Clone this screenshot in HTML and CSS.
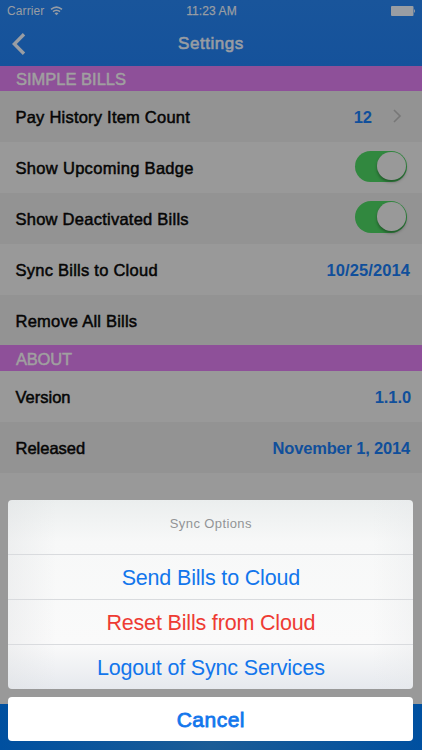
FILE: index.html
```html
<!DOCTYPE html>
<html lang="en">
<head>
<meta charset="utf-8">
<title>Settings</title>
<link rel="stylesheet" href="styles.css">
</head>
<body>
<div class="screen">
  <header class="header">
    <div class="status">
      <div class="carrier"><span>Carrier</span>
        <svg width="13" height="10" viewBox="0 0 13 10" fill="none" stroke="#969ca5" stroke-width="1.5"><path d="M1 3.4Q6.5-1.2 12 3.4M3 5.7Q6.5 2.8 10 5.7"/><path d="M4.5 7.3Q6.5 5.7 8.5 7.3L6.5 9.3Z" fill="#969ca5" stroke="none"/></svg>
      </div>
      <span class="time">11:23 AM</span>
      <svg class="battery" width="25" height="10" viewBox="0 0 25 10" fill="#999da3"><rect width="22.5" height="10" rx="1"/><path d="M23 3Q25 5 23 7Z"/></svg>
    </div>
    <div class="nav">
      <svg class="back" width="14" height="22" viewBox="0 0 14 22" fill="none" stroke="#999da3" stroke-width="3.4"><path d="M12 1.3 2.3 11 12 20.7"/></svg>
      <h1 class="title">Settings</h1>
    </div>
  </header>
  <main class="list">
    <h2 class="section"><span class="simple">SIMPLE BILLS</span></h2>
    <div class="row alt"><span class="pay">Pay History Item Count</span><span class="value count">12</span><svg class="chevron" width="9" height="14" viewBox="0 0 9 14" fill="none" stroke="#777" stroke-width="1.6"><path d="M1 1 7 7 1 13"/></svg></div>
    <div class="row"><span class="upcoming">Show Upcoming Badge</span><span class="switch"></span></div>
    <div class="row alt"><span class="deactivated">Show Deactivated Bills</span><span class="switch"></span></div>
    <div class="row"><span class="sync">Sync Bills to Cloud</span><span class="value date">10/25/2014</span></div>
    <div class="row alt"><span class="remove">Remove All Bills</span></div>
    <h2 class="section"><span class="about">ABOUT</span></h2>
    <div class="row"><span class="version">Version</span><span class="value number">1.1.0</span></div>
    <div class="row alt"><span class="released">Released</span><span class="value month">November 1, 2014</span></div>
  </main>
  <footer class="tabbar"></footer>
  <div class="sheet">
    <div class="options">
      <div class="sheet-title"><span>Sync Options</span></div>
      <div class="action"><span class="send">Send Bills to Cloud</span></div>
      <div class="action danger"><span class="reset">Reset Bills from Cloud</span></div>
      <div class="action"><span class="logout">Logout of Sync Services</span></div>
    </div>
    <div class="cancel"><span>Cancel</span></div>
  </div>
</div>
</body>
</html>
```
FILE: styles.css
```css
* { box-sizing: border-box; }
body { margin: 0; font-family: "Liberation Sans", Arial, sans-serif; }
.screen { position: relative; display: flex; flex-direction: column; width: 422px; height: 750px; overflow: hidden; background: #999; }
.header { height: 65.5px; background: linear-gradient(#19559b, #15529b); color: #999da3; }
.status { display: grid; grid-template-columns: 1fr auto 1fr; align-items: center; height: 22px; padding: 0 6px 0 7px; font-size: 12px; }
.carrier { display: flex; align-items: center; gap: 6px; letter-spacing: .1px; }
.time { letter-spacing: .1px; -webkit-text-stroke: .25px; }
.battery { justify-self: end; }
.nav { display: grid; grid-template-columns: 30px 1fr 30px; align-items: center; height: 43.5px; padding: 0 12px; }
.title { margin: 0; text-align: center; font-size: 17px; font-weight: 400; letter-spacing: .55px; -webkit-text-stroke: .6px; }
.section { display: flex; align-items: center; height: 25.5px; margin: 0; padding: 2px 16px 0; background: #8e5099; color: #a0a0a0; font-size: 16.5px; font-weight: 400; -webkit-text-stroke: .5px; }
.about { letter-spacing: -.2px; }
.row { display: flex; align-items: center; justify-content: space-between; height: 50.9px; padding: 2px 12px 0 15.5px; background: #999; color: #050505; font-size: 16.5px; -webkit-text-stroke: .5px; }
.row.alt { background: #939393; }
.pay, .remove { letter-spacing: .22px; }
.upcoming { letter-spacing: .31px; }
.deactivated, .sync { letter-spacing: .25px; }
.value { color: #104f9b; font-weight: 700; -webkit-text-stroke: 0; }
.count { margin-left: auto; margin-right: 21px; }
.date { letter-spacing: .1px; }
.number { margin-right: -1px; letter-spacing: -.1px; }
.month { letter-spacing: -.18px; }
.chevron { margin: 0 8px 3px 0; -webkit-text-stroke: 0; }
.switch { width: 52px; height: 31.5px; margin: 0 3px 4px 0; padding: 1px 1.5px; border-radius: 16px; background: #31883f; }
.switch::after { content: ""; display: block; width: 28.5px; height: 28.5px; margin-left: auto; border-radius: 50%; background: #999; box-shadow: 0 2px 3px rgba(0, 0, 0, .35); }
.tabbar { height: 46px; margin-top: auto; background: linear-gradient(90deg, #0050a0, #1b5c96 50%, #0050a0); }
.sheet { position: absolute; left: 8.4px; right: 8.7px; top: 500px; display: flex; flex-direction: column; gap: 8px; text-align: center; color: #1276ec; }
.options { height: 188.7px; border-radius: 4px; overflow: hidden; background: linear-gradient(90deg, rgba(220, 222, 224, .35), transparent 12%, transparent 90%, rgba(230, 232, 234, .35)), linear-gradient(#ebeeee, #f7f8f8 22%, #fafafa 76%, #e6e9ee); }
.sheet-title { height: 54px; display: grid; place-items: center; padding-bottom: 8px; color: #929496; font-size: 13px; letter-spacing: .4px; }
.action { display: grid; place-items: center; height: 44.9px; padding-top: 3px; border-top: 1px solid #d9dbde; font-size: 21.5px; letter-spacing: -.17px; }
.danger { color: #ee3b33; }
.cancel { display: grid; place-items: center; height: 44.8px; padding-top: 2px; border-radius: 4px; background: #fff; font-size: 21px; letter-spacing: .5px; -webkit-text-stroke: .8px; }
```
